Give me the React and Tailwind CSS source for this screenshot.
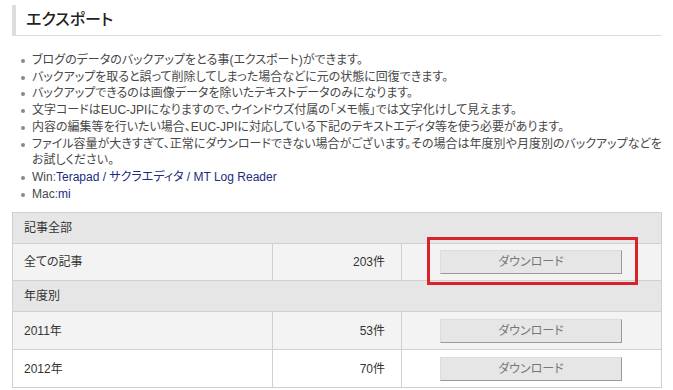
import React from 'react';

const notes = [
  'ブログのデータのバックアップをとる事(エクスポート)ができます。',
  'バックアップを取ると誤って削除してしまった場合などに元の状態に回復できます。',
  'バックアップできるのは画像データを除いたテキストデータのみになります。',
  '文字コードはEUC-JPIになりますので、ウインドウズ付属の「メモ帳」では文字化けして見えます。',
  '内容の編集等を行いたい場合、EUC-JPIに対応している下記のテキストエディタ等を使う必要があります。',
];

const years = [
  { label: '2011年', count: '53件', bg: 'bg-[#f3f3f3]' },
  { label: '2012年', count: '70件', bg: 'bg-white' },
];

function DownloadButton() {
  return (
    <button className="w-[182px] h-[24px] bg-[#e6e6e6] border border-[#dcdcdc] border-r-[#9a9a9a] border-b-[#9a9a9a] text-[#777] text-[12px] leading-none">
      ダウンロード
    </button>
  );
}

function Bullet({ children }) {
  return (
    <li className="flex items-start">
      <span className="w-[20px] flex justify-center shrink-0 pt-[7px] pl-[2px]">
        <span className="w-[4px] h-[4px] rounded-full bg-[#8a8a8a]" />
      </span>
      <span>{children}</span>
    </li>
  );
}

export default function App() {
  return (
    <div className="w-[673px] h-[390px] bg-white overflow-hidden relative text-[#484848] font-['Liberation_Sans','Noto_Sans_CJK_JP',sans-serif] [font-feature-settings:'palt']">
      <div className="pl-3 pr-[11px] pt-[5px]">
        {/* Title */}
        <h2 className="h-[31px] border-l-4 border-l-[#dddddd] border-b border-b-[#dddddd] pl-[10px] flex items-center text-[16px] text-[#222] font-medium">
          エクスポート
        </h2>

        {/* Notes */}
        <ul className="mt-[16px] text-[12px] leading-[16.7px] whitespace-nowrap">
          {notes.map((n) => (
            <Bullet key={n}>{n}</Bullet>
          ))}
          <Bullet>
            ファイル容量が大きすぎて、正常にダウンロードできない場合がございます。その場合は年度別や月度別のバックアップなどを
            <br />
            お試しください。
          </Bullet>
          <Bullet>
            Win:<span className="text-[#1b2a80]">Terapad / サクラエディタ / MT Log Reader</span>
          </Bullet>
          <Bullet>
            Mac:<span className="text-[#1b2a80]">mi</span>
          </Bullet>
        </ul>

        {/* Table */}
        <table className="mt-[10px] w-[650px] border-collapse text-[12px] text-[#333] table-fixed">
          <colgroup>
            <col className="w-[260px]" />
            <col className="w-[129px]" />
            <col />
          </colgroup>
          <tbody>
            <tr className="h-[31px] bg-[#e6e6e6]">
              <td colSpan={3} className="border border-[#d0d0d0] pl-[11px]">記事全部</td>
            </tr>
            <tr className="h-[37px] bg-[#f3f3f3]">
              <td className="border border-[#d0d0d0] pl-[11px]">全ての記事</td>
              <td className="border border-[#d0d0d0] text-right pr-[16px]">203件</td>
              <td className="border border-[#d0d0d0] pl-[38px]">
                <DownloadButton />
              </td>
            </tr>
            <tr className="h-[31px] bg-[#e6e6e6]">
              <td colSpan={3} className="border border-[#d0d0d0] pl-[11px]">年度別</td>
            </tr>
            {years.map((y) => (
              <tr key={y.label} className={`h-[38px] ${y.bg}`}>
                <td className="border border-[#d0d0d0] pl-[11px]">{y.label}</td>
                <td className="border border-[#d0d0d0] text-right pr-[16px]">{y.count}</td>
                <td className="border border-[#d0d0d0] pl-[38px]">
                  <DownloadButton />
                </td>
              </tr>
            ))}
          </tbody>
        </table>
      </div>

      {/* red highlight */}
      <div className="absolute left-[427px] top-[237px] w-[211px] h-[48px] border-[3px] border-[#d8222c] pointer-events-none" />
    </div>
  );
}
